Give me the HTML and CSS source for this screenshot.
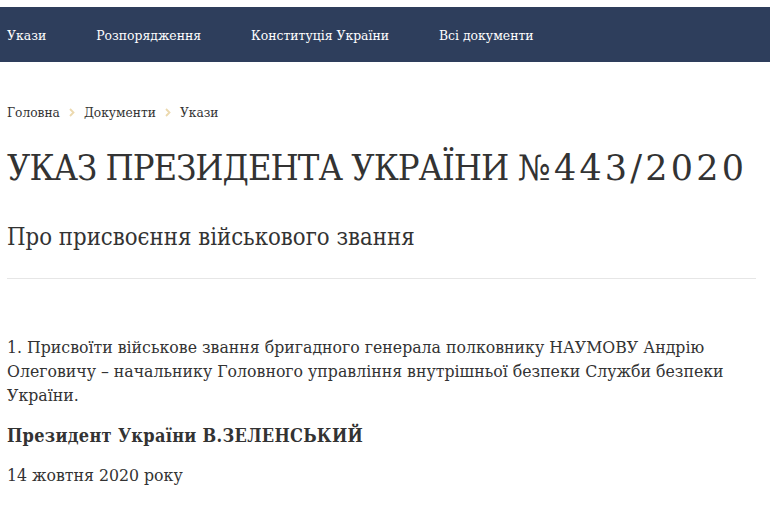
FILE: index.html
```html
<!DOCTYPE html>
<html lang="uk">
<head>
<meta charset="utf-8">
<link rel="stylesheet" href="styles.css">
</head>
<body>
<nav class="topnav">
  <a class="nav-item" href="#">Укази</a>
  <a class="nav-item" href="#">Розпорядження</a>
  <a class="nav-item" href="#">Конституція України</a>
  <a class="nav-item" href="#">Всі документи</a>
</nav>
<main class="content">
  <div class="crumbs">
    <a href="#">Головна</a>
    <svg class="sep" width="6" height="9" viewBox="0 0 6 9"><path d="M1 1 L4.5 4.5 L1 8" fill="none" stroke="#ecd9ae" stroke-width="1.8"/></svg>
    <a href="#">Документи</a>
    <svg class="sep" width="6" height="9" viewBox="0 0 6 9"><path d="M1 1 L4.5 4.5 L1 8" fill="none" stroke="#ecd9ae" stroke-width="1.8"/></svg>
    <span>Укази</span>
  </div>
  <h1 class="title">УКАЗ ПРЕЗИДЕНТА УКРАЇНИ <span class="num">№443/2020</span></h1>
  <h2 class="subtitle">Про присвоєння військового звання</h2>
  <hr class="rule">
  <p class="text">1. Присвоїти військове звання бригадного генерала полковнику НАУМОВУ Андрію Олеговичу – начальнику Головного управління внутрішньої безпеки Служби безпеки України.</p>
  <p class="sign">Президент України В.ЗЕЛЕНСЬКИЙ</p>
  <p class="date">14 жовтня 2020 року</p>
</main>
</body>
</html>
```
FILE: styles.css
```css
html, body { margin: 0; padding: 0; background: #fff; }
body { font-family: "DejaVu Serif Condensed", "Liberation Serif", serif; color: #333; }
.topnav {
  margin-top: 7px;
  height: 55px;
  background: #2e3e5c;
  display: flex;
  align-items: center;
  padding: 0 7px;
  gap: 50px;
}
.nav-item { color: #fff; text-decoration: none; font-size: 13.8px; }
.content { padding: 0 14px 0 7px; }
.crumbs { margin-top: 42px; font-size: 13.6px; display: flex; align-items: center; gap: 9px; }
.crumbs a { color: #333; text-decoration: none; }
.title { font-weight: normal; font-size: 36px; letter-spacing: -1px; margin: 26px 0 0; line-height: 1.2; color: #333; white-space: nowrap; }
.title .num { font-family: "DejaVu Serif", serif; font-size: 35px; letter-spacing: 3.2px; }
.subtitle { font-weight: normal; font-size: 23.7px; margin: 34px 0 0; line-height: 1.2; color: #333; }
.rule { border: 0; border-top: 1px solid #e6e6e6; margin: 26px 0 0; }
.text { font-size: 17.5px; line-height: 24px; margin: 56px 0 0; }
.sign { font-size: 18px; letter-spacing: 0.3px; font-weight: bold; margin: 18px 0 0; }
.date { font-size: 17.5px; margin: 19px 0 0; }
```
